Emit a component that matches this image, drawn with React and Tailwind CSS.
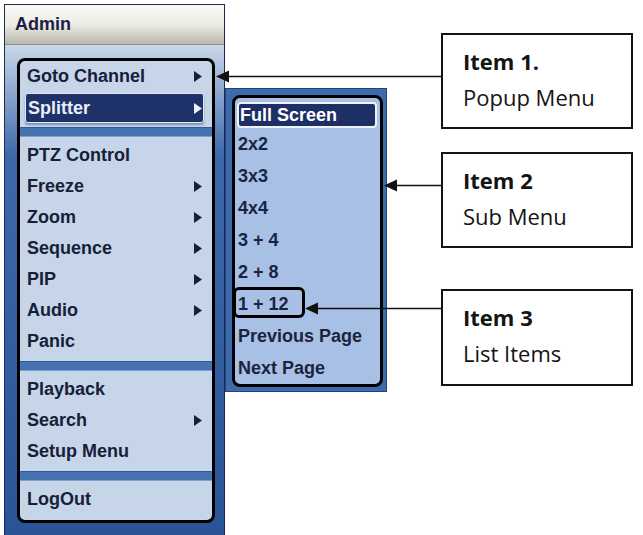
import React from "react";

const mainGroups = [
  [
    { label: "Goto Channel", sub: true },
    { label: "Splitter", sub: true, active: true },
  ],
  [
    { label: "PTZ Control" },
    { label: "Freeze", sub: true },
    { label: "Zoom", sub: true },
    { label: "Sequence", sub: true },
    { label: "PIP", sub: true },
    { label: "Audio", sub: true },
    { label: "Panic" },
  ],
  [{ label: "Playback" }, { label: "Search", sub: true }, { label: "Setup Menu" }],
  [{ label: "LogOut" }],
];

const subItems = ["2x2", "3x3", "4x4", "3 + 4", "2 + 8", "1 + 12", "Previous Page", "Next Page"];

const labels = [
  { title: "Item 1.", text: "Popup Menu", cls: "mt-[33px] h-[96px]" },
  { title: "Item 2", text: "Sub Menu", cls: "mt-[23px] h-[96px]" },
  { title: "Item 3", text: "List Items", cls: "mt-[41px] h-[97px]" },
];

const Caret = ({ light }) => (
  <svg width="8" height="11" viewBox="0 0 8 11" className="shrink-0">
    <polygon points="0,0 8,5.5 0,11" fill={light ? "#eef3fb" : "#16203a"} />
  </svg>
);

const Separator = () => (
  <div className="h-[17px] pt-[4px]">
    <div className="h-[10px] bg-[#4672b2] border-t border-b border-t-[#2f5a9c] border-b-[#7f9fcf]" />
  </div>
);

const MainRow = ({ item }) => {
  if (item.active) {
    return (
      <div className="h-[31px] pt-[1px] pl-[5px] pr-[8px]">
        <div className="h-[30px] flex items-center justify-between bg-[#1e3169] border border-[#dfe8f5] rounded-[3px] pl-[2px] pr-[1px] shadow-[0_2px_2px_rgba(30,50,100,0.4)]">
          <span className="text-[#e9eef8]">{item.label}</span>
          <Caret light />
        </div>
      </div>
    );
  }
  return (
    <div className="h-[31px] flex items-center justify-between pl-[7px] pr-[10px]">
      <span>{item.label}</span>
      {item.sub && <Caret />}
    </div>
  );
};

export default function App() {
  return (
    <div className="relative w-[643px] h-[535px] overflow-hidden bg-white flex items-start font-['Liberation_Sans',Arial,sans-serif]">
      {/* main popup menu */}
      <div className="ml-[4px] mt-[4px] w-[221px] h-[545px] shrink-0 border border-[#1d2c55] flex flex-col">
        <div className="h-[40px] flex items-center pl-[10px] bg-linear-to-b from-[#fbfbf6] via-[#ecece4] to-[#b9b9ad] border-b border-[#8d8d86]">
          <span className="text-[18px] font-bold text-[#1c1d4a]">Admin</span>
        </div>
        <div className="flex-1 pl-[12px] pr-[9px] pt-[13px] bg-linear-to-b from-[#cbd8e9] from-0% via-[#3d68a9] via-[22%] to-[#2a5395]">
          <div className="w-[198px] border-[3px] border-black rounded-[8px] bg-[#c6d5e8] pb-[5px] text-[18px] font-bold text-[#172038] overflow-hidden">
            {mainGroups.map((group, gi) => (
              <div key={gi}>
                {gi > 0 && <Separator />}
                {group.map((item) => (
                  <MainRow key={item.label} item={item} />
                ))}
              </div>
            ))}
          </div>
        </div>
      </div>

      {/* splitter sub menu */}
      <div className="mt-[88px] w-[162px] shrink-0 bg-[#3e6aae] border border-[#24407a] pl-[6px] pt-[6px] pr-[3px] pb-[4px]">
        <div className="border-[3px] border-black rounded-[8px] bg-[#a8c0e5] text-[18px] font-bold text-[#1a2440]">
          <div className="h-[30px] pt-[4px] pl-[2px] pr-[3px]">
            <div className="h-[26px] flex items-center bg-[#1e2f66] border-2 border-[#eef2f9] rounded-[4px] pl-[1px] text-white">
              Full Screen
            </div>
          </div>
          {subItems.map((s) => (
            <div key={s} className="relative h-[32px] flex items-center pl-[3px]">
              {s}
              {s === "1 + 12" && (
                <span className="absolute left-[-2px] top-[-1px] w-[72px] h-[31px] border-[3px] border-black rounded-[6px]" />
              )}
            </div>
          ))}
        </div>
      </div>

      {/* annotation labels */}
      <div className="ml-[54px] w-[192px] shrink-0 flex flex-col font-['Open_Sans',sans-serif] text-[22px] leading-[36px] text-[#141414]">
        {labels.map((l) => (
          <div key={l.title} className={`${l.cls} border-2 border-[#141414] pl-[20px] pt-[8px]`}>
            <div className="font-bold">{l.title}</div>
            <div>{l.text}</div>
          </div>
        ))}
      </div>

      {/* callout arrows */}
      <svg className="absolute inset-0 pointer-events-none" width="643" height="535">
        <line x1="441" y1="76.5" x2="228" y2="76.5" stroke="#111" strokeWidth="1.5" />
        <polygon points="216,76.5 229,70.5 229,82.5" fill="#111" />
        <line x1="442" y1="185.5" x2="396" y2="185.5" stroke="#111" strokeWidth="1.5" />
        <polygon points="384,185.5 397,179.5 397,191.5" fill="#111" />
        <line x1="441" y1="308.5" x2="316" y2="308.5" stroke="#111" strokeWidth="1.5" />
        <polygon points="305,308.5 318,302.5 318,314.5" fill="#111" />
      </svg>
    </div>
  );
}
